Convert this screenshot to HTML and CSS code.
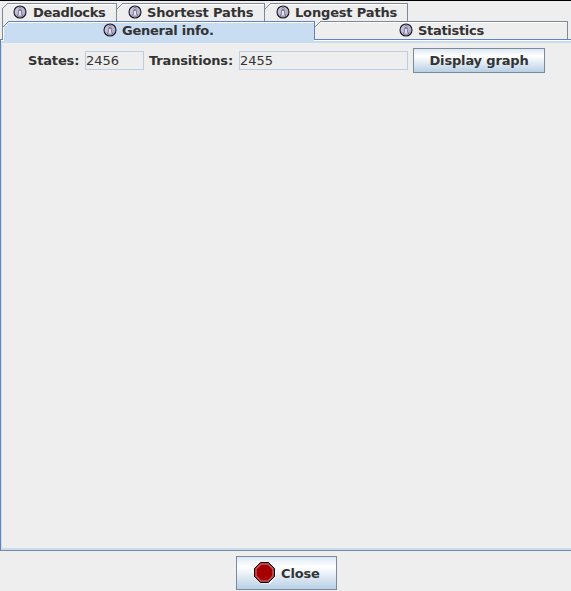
FILE: index.html
```
<!DOCTYPE html>
<html lang="en">
<head>
<meta charset="utf-8">
<title>Graph information</title>
<link rel="stylesheet" href="styles.css">
</head>
<body>
<svg width="0" height="0" class="defs">
  <defs>
    <linearGradient id="disc" x1="0" y1="0" x2="1" y2="1"><stop offset="0" stop-color="#d2cee6"/><stop offset="1" stop-color="#a5a1c0"/></linearGradient>
    <symbol id="info" viewBox="0 0 14 14">
      <circle cx="7" cy="7" r="6" fill="url(#disc)" stroke="#17151f" stroke-width="1.1"/>
      <path d="M6 2.500h2v2H6zM5.500 5.500h3v4h1V11h-5V9.500h1z" fill="#e6e3f0" stroke="#68637e" stroke-width=".7"/>
    </symbol>
    <symbol id="corner" viewBox="0 0 6 6"><path d="M0 5h1v1H0zM1 4h1v1H1zM2 3h1v1H2zM3 2h1v1H3zM4 1h1v1H4zM5 0h1v1H5z" fill="currentColor"/></symbol>
  </defs>
</svg>
<main class="window">
  <div class="tabs upper">
    <div class="tab deadlocks"><svg class="corner"><use href="#corner"/></svg><svg class="info"><use href="#info"/></svg><span>Deadlocks</span></div>
    <div class="tab shortest"><svg class="corner"><use href="#corner"/></svg><svg class="info"><use href="#info"/></svg><span>Shortest Paths</span></div>
    <div class="tab longest"><svg class="corner"><use href="#corner"/></svg><svg class="info"><use href="#info"/></svg><span>Longest Paths</span></div>
  </div>
  <div class="tabs lower">
    <div class="tab general"><svg class="corner"><use href="#corner"/></svg><svg class="info"><use href="#info"/></svg><span>General info.</span></div>
    <div class="tab statistics"><svg class="corner"><use href="#corner"/></svg><svg class="info"><use href="#info"/></svg><span>Statistics</span></div>
  </div>
  <section class="panel">
    <div class="strip"><i class="edge"></i><i class="join"></i><i class="rest"></i></div>
    <div class="fields">
      <span class="label states">States:</span><div class="field small">2456</div>
      <span class="label transitions">Transitions:</span><div class="field large">2455</div>
      <div class="button display">Display graph</div>
    </div>
  </section>
  <footer>
    <div class="button close">
      <svg class="stop" viewBox="0 0 22 22">
        <path d="M7 1h9l5.500 5.500v9L16 21.500H7z" fill="#fff"/>
        <path d="M6.500.5h8l6 6v8l-6 6h-8l-6-6v-8z" fill="#a50000" stroke="#100000"/>
        <path d="M7 2h7l5 5v7l-5 5H7l-5-5V7z" fill="none" stroke="#c05a5a" stroke-width="1.500"/>
      </svg>
      <span>Close</span>
    </div>
  </footer>
</main>
</body>
</html>
```
FILE: styles.css
```
*, *::before, *::after { box-sizing: border-box; }
body { margin: 0; background: #eee; color: #333; font: bold 13px/16px "DejaVu Sans", sans-serif; letter-spacing: -0.16px; }
.defs { position: absolute; }
.window { width: 571px; height: 591px; border-top: 1px solid #000; padding-top: 2px; overflow: hidden; }
.tabs { display: flex; height: 18px; padding-left: 2px; white-space: nowrap; }
.tab { position: relative; display: flex; align-items: flex-start; height: 18px; color: #333; }
.tab::before { content: ""; position: absolute; top: 0; left: 6px; right: 0; height: 2px; background: #7a8a99; border-bottom: 1px solid #fff; }
.upper .tab { border-right: 1px solid #7a8a99; padding-left: 11px; }
.corner { position: absolute; left: 0; top: 0; width: 6px; height: 6px; color: #7a8a99; }
.info { position: relative; width: 14px; height: 14px; margin-top: 2px; flex: none; }
.tab span { margin: 2px 0 0 5px; }
.deadlocks { width: 115px; letter-spacing: -0.3px; }
.deadlocks span { margin-left: 6px; }
.deadlocks::after { content: ""; position: absolute; left: 0; top: 6px; width: 1px; height: 30px; background: #7a8a99; }
.shortest { width: 148px; }
.longest { width: 143px; }
.lower { padding-left: 3px; }
.general { width: 312px; padding-left: 100px; letter-spacing: -0.25px; background: linear-gradient(#c8ddf2, #c8ddf2) 6px 0 / 306px 18px no-repeat, linear-gradient(#c8ddf2, #c8ddf2) 4px 2px / 307px 16px no-repeat, linear-gradient(#c8ddf2, #c8ddf2) 1px 5px / 310px 13px no-repeat; border-right: 1px solid #6382bf; }
.general::before { background: #6382bf; }
.general .corner { color: #6382bf; }
.general::after { content: ""; position: absolute; left: 0; top: 6px; height: 13px; width: 1px; background: #fff; }
.statistics { width: 253px; padding-left: 84px; letter-spacing: -0.3px; border-right: 1px solid #7a8a99; }
.panel { height: 512px; border-left: 1px solid #6382bf; border-bottom: 1px solid #7a8a99; box-shadow: inset 1px 0 #c8ddf2, inset 0 -2px #c8ddf2; }
.strip { display: flex; height: 4px; }
.edge { width: 3px; border-top: 1px solid #6382bf; background: linear-gradient(#fff 1px, #c8ddf2 1px); }
.join { width: 310px; background: #c8ddf2; }
.rest { flex: 1; border-top: 1px solid #6382bf; background: linear-gradient(#fff 1px, #c8ddf2 1px); }
.fields { display: flex; align-items: center; padding: 5px 0 0 27px; }
.label { white-space: nowrap; }
.states { width: 57px; }
.transitions { width: 90px; }
.field { height: 19px; border: 1px solid #b8cfe5; padding-left: 0; font-weight: normal; line-height: 17px; letter-spacing: 0; }
.small { width: 59px; margin-right: 5px; }
.large { width: 169px; margin-right: 5px; }
.button { display: flex; align-items: center; justify-content: center; border: 1px solid #7a8a99; background: linear-gradient(#dde8f3 0%, #fff 30%, #f1f6fa 45%, #b8cfe5 100%); white-space: nowrap; }
.display { width: 132px; height: 25px; }
footer { padding: 5px 0 0 236px; }
.close { width: 101px; height: 34px; justify-content: flex-start; padding-left: 17px; }
.close span { margin-top: 2px; }
.stop { width: 22px; height: 22px; margin-right: 5px; }
```
